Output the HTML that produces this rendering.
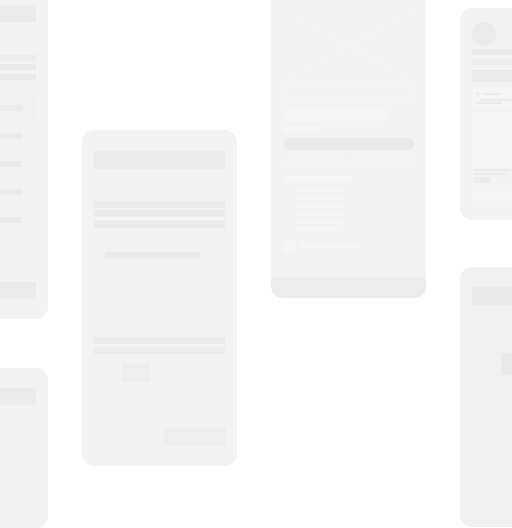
<!DOCTYPE html>
<html><head><meta charset="utf-8"><style>
*{margin:0;padding:0;box-sizing:border-box}
body{width:512px;height:501px;background:#fff;position:relative;overflow:hidden;font-family:"Liberation Sans",sans-serif}
div{position:absolute}
.c{background:#f3f3f3;border-radius:12px}
.b{background:#ebebeb}
.l{background:#f5f5f5}
.w{background:#f6f6f6}
.f{background:#f0f0f0}
</style></head><body>
<!-- left card 1 -->
<div class="c" style="left:-20px;top:-20px;width:68px;height:339px"></div>
<div class="b" style="left:0;top:5px;width:36px;height:17px"></div>
<div class="b" style="left:0;top:55px;width:36px;height:6px"></div>
<div class="b" style="left:0;top:64px;width:36px;height:6px"></div>
<div class="b" style="left:0;top:74px;width:36px;height:6px"></div>
<div style="left:0;top:96px;width:36px;height:23px;background:#f0f0f0"></div>
<div class="b" style="left:0;top:105px;width:22px;height:6px"></div>
<div class="b" style="left:0;top:133px;width:22px;height:6px"></div>
<div class="b" style="left:0;top:161px;width:22px;height:6px"></div>
<div class="b" style="left:0;top:189px;width:22px;height:6px"></div>
<div class="b" style="left:0;top:217px;width:22px;height:6px"></div>
<div class="b" style="left:0;top:282px;width:36px;height:17px"></div>
<!-- left card 2 -->
<div class="c" style="left:-20px;top:368px;width:68px;height:160px"></div>
<div class="b" style="left:0;top:388px;width:36px;height:17px"></div>
<!-- middle card -->
<div class="c" style="left:82px;top:130px;width:155px;height:336px"></div>
<div class="b" style="left:94px;top:151px;width:131px;height:18px"></div>
<div class="b" style="left:94px;top:201px;width:131px;height:7px"></div>
<div class="b" style="left:94px;top:210px;width:131px;height:7px"></div>
<div class="b" style="left:94px;top:220px;width:131px;height:8px"></div>
<div class="b" style="left:105px;top:252px;width:95px;height:7px"></div>
<div class="b" style="left:94px;top:337px;width:131px;height:7px"></div>
<div class="b" style="left:94px;top:347px;width:131px;height:7px"></div>
<div style="left:122px;top:364px;width:28px;height:18px;background:#eeeeee"></div>
<div style="left:164px;top:428px;width:62px;height:18px;background:#eeeeee"></div>
<!-- card 3 -->
<div class="c" style="left:271px;top:-20px;width:155px;height:318px;overflow:hidden">
  <div style="left:0;top:298px;width:155px;height:20px;background:#ececec"></div>
</div>
<svg style="position:absolute;left:283px;top:10px" width="132" height="91">
<g stroke="#f6f6f6" stroke-width="1" fill="none">
<line x1="0" y1="0" x2="132" y2="72"/><line x1="132" y1="0" x2="0" y2="72"/>
<rect x="0.5" y="72.5" width="131" height="18"/>
<line x1="19" y1="72" x2="19" y2="91"/><line x1="38" y1="72" x2="38" y2="91"/><line x1="57" y1="72" x2="57" y2="91"/><line x1="76" y1="72" x2="76" y2="91"/><line x1="94" y1="72" x2="94" y2="91"/><line x1="113" y1="72" x2="113" y2="91"/>
</g></svg>
<div class="w" style="left:283px;top:110px;width:106px;height:11px"></div>
<div class="w" style="left:283px;top:126px;width:38px;height:6px"></div>
<div style="left:283px;top:138px;width:131px;height:12px;border-radius:6px;background:#ebebeb"></div>
<div style="left:283px;top:156px;width:62px;height:11px;border-radius:6px;border:1px solid #f6f6f6"></div>
<div style="left:351px;top:156px;width:63px;height:11px;border-radius:6px;border:1px solid #f6f6f6"></div>
<div class="w" style="left:283px;top:176px;width:70px;height:6px"></div>
<div class="w" style="left:296px;top:188px;width:46px;height:4px"></div>
<div class="w" style="left:296px;top:196px;width:46px;height:4px"></div>
<div class="w" style="left:296px;top:204px;width:46px;height:4px"></div>
<div class="w" style="left:296px;top:212px;width:46px;height:4px"></div>
<div class="w" style="left:296px;top:220px;width:46px;height:4px"></div>
<div class="w" style="left:296px;top:227px;width:46px;height:4px"></div>
<div class="w" style="left:283px;top:240px;width:12px;height:12px"></div>
<div class="w" style="left:300px;top:243px;width:58px;height:5px"></div>
<!-- card 4 -->
<div class="c" style="left:460px;top:8px;width:80px;height:212px"></div>
<div style="left:472px;top:22px;width:24px;height:24px;border-radius:50%;background:#ebebeb"></div>
<div class="b" style="left:472px;top:49px;width:40px;height:6px"></div>
<div class="b" style="left:472px;top:59px;width:40px;height:6px"></div>
<div class="b" style="left:472px;top:70px;width:40px;height:12px"></div>
<div class="w" style="left:472px;top:88px;width:40px;height:18px"></div>
<div class="b" style="left:476px;top:92px;width:3px;height:3px;border-radius:50%"></div>
<div class="b" style="left:483px;top:93px;width:18px;height:2px"></div>
<div class="b" style="left:480px;top:99px;width:32px;height:2px"></div>
<div class="b" style="left:476px;top:102px;width:26px;height:2px"></div>
<div class="w" style="left:472px;top:112px;width:40px;height:58px"></div>
<div class="b" style="left:473px;top:169px;width:39px;height:2px"></div>
<div class="b" style="left:473px;top:173px;width:33px;height:2px"></div>
<div class="b" style="left:473px;top:177px;width:17px;height:6px"></div>
<div class="w" style="left:472px;top:191px;width:40px;height:10px"></div>
<!-- card 5 -->
<div class="c" style="left:460px;top:267px;width:80px;height:260px;background:#f1f1f1"></div>
<div style="left:472px;top:287px;width:40px;height:18px;background:#e9e9e9"></div>
<div style="left:502px;top:353px;width:10px;height:22px;border-radius:3px;background:#e9e9e9"></div>
<div style="left:472px;top:380px;width:40px;height:20px;border:1px solid #f4f4f4"></div>
<div style="left:472px;top:430px;width:40px;height:20px;border:1px solid #f4f4f4"></div>
<div style="left:472px;top:476px;width:40px;height:25px;border:1px solid #f4f4f4"></div>
</body></html>
